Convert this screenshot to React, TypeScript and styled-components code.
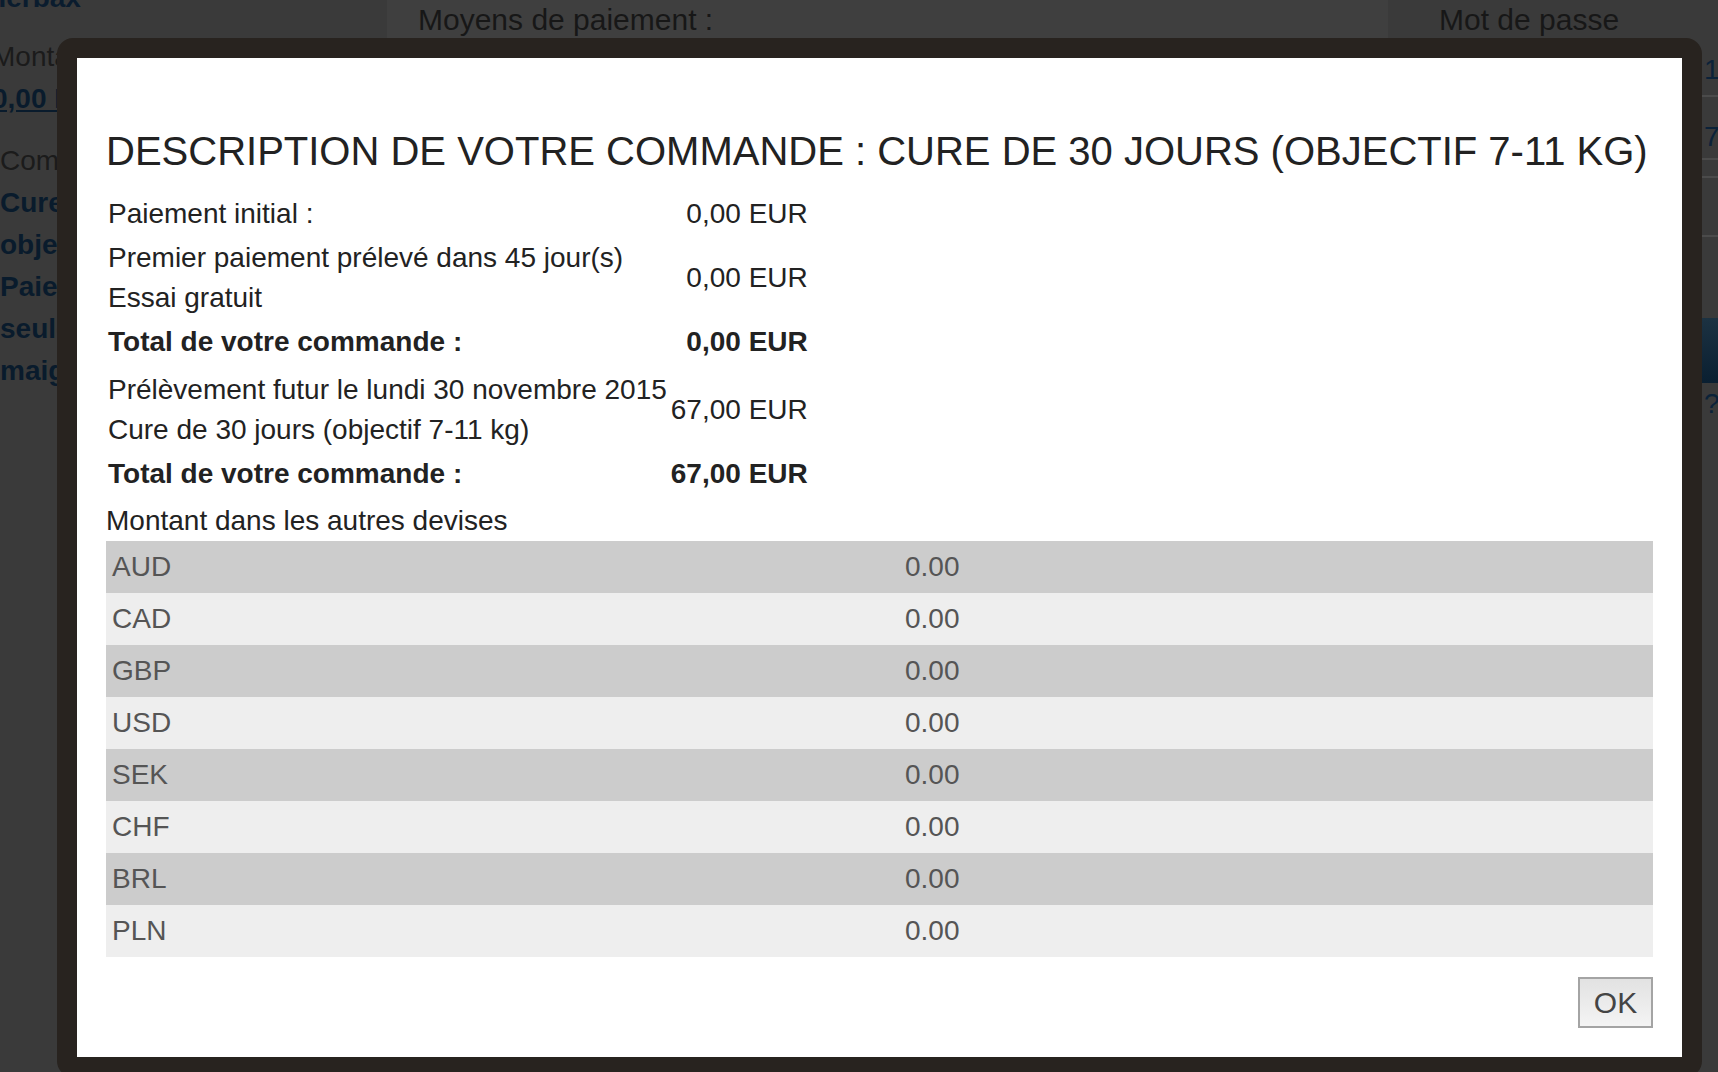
import React from "react";
import styled, { createGlobalStyle } from "styled-components";

const GlobalStyle = createGlobalStyle`
  html, body {
    margin: 0;
    padding: 0;
    height: 100%;
    overflow: hidden;
    background: #3a3a3a;
  }
  body {
    font-family: "Liberation Sans", Arial, Helvetica, sans-serif;
  }
`;

// page behind the dialog, drawn already dimmed by the backdrop
const Page = styled.div`
  display: grid;
  grid-template-columns: 387px 1001px 1fr;
  grid-template-rows: 40px 1fr;
  height: 100vh;
  font-size: 28px;
  color: #1a1a1a;
`;

const SideColumn = styled.div`
  grid-row: 1 / span 2;
  overflow: hidden;
  line-height: 42px;
  white-space: nowrap;
`;

const Brand = styled.div`
  margin: -23px 0 0 -14px;
  font-weight: bold;
  color: #0a1c2e;
`;

const SideLabel = styled.div<{ $top?: number; $shift?: number }>`
  margin-top: ${(p) => p.$top ?? 0}px;
  margin-left: ${(p) => p.$shift ?? 0}px;
  color: #1b1b1b;
`;

const SideLink = styled.div<{ $top?: number; $shift?: number }>`
  margin-top: ${(p) => p.$top ?? 0}px;
  margin-left: ${(p) => p.$shift ?? 0}px;
  font-weight: bold;
  color: #091b2c;
`;

const Amount0 = styled(SideLink)`
  text-decoration: underline;
`;

const HeadCell = styled.div<{ $indent: number; $lit?: boolean }>`
  padding-left: ${(p) => p.$indent}px;
  font-size: 30px;
  line-height: 40px;
  background: ${(p) => (p.$lit ? "#3f3f3f" : "#3a3a3a")};
  color: #171717;
  white-space: nowrap;
`;

const MidBody = styled.div`
  background: #3c3c3c;
`;

const LoginBody = styled.div`
  padding-left: 314px;
  line-height: 42px;
`;

const Field = styled.div<{ $top: number; $bottom: number }>`
  padding: ${(p) => p.$top}px 0 ${(p) => p.$bottom}px 2px;
  border-bottom: 2px solid #4b4b4b;
  color: #0b2239;
`;

const Rule = styled.div<{ $top: number }>`
  margin-top: ${(p) => p.$top}px;
  height: 2px;
  background: #4b4b4b;
`;

const LoginButton = styled.div`
  margin-top: 81px;
  height: 65px;
  background: linear-gradient(#1c3242, #0a1f31);
`;

const Help = styled.div`
  color: #0b2239;
  padding-left: 2px;
`;

// order summary dialog
const Dialog = styled.div`
  position: fixed;
  left: 57px;
  top: 38px;
  width: 1645px;
  box-sizing: border-box;
  border: 20px solid #28231f;
  border-radius: 16px;
  background: #fff;
  padding: 30px 29px 29px 29px;
  color: #222;
`;

const Title = styled.h1`
  margin: 40px 0 18px;
  font-size: 40px;
  line-height: 46px;
  font-weight: normal;
  white-space: nowrap;
`;

const Summary = styled.div`
  display: grid;
  grid-template-columns: max-content max-content;
  font-size: 28px;
  line-height: 40px;
`;

const Label = styled.div<{ $strong?: boolean; $spaced?: boolean }>`
  padding: 2px;
  margin-top: ${(p) => (p.$spaced ? 4 : 0)}px;
  font-weight: ${(p) => (p.$strong ? "bold" : "normal")};
`;

const Value = styled(Label)`
  text-align: right;
  align-self: center;
  white-space: nowrap;
`;

const Caption = styled.div`
  margin-top: 5px;
  font-size: 28px;
  line-height: 40px;
`;

const Rates = styled.div`
  display: grid;
  grid-template-columns: 793px 1fr;
  font-size: 28px;
  color: #555;
`;

const RateCell = styled.div<{ $shade: boolean }>`
  background: ${(p) => (p.$shade ? "#ccc" : "#eee")};
  line-height: 52px;
  padding-left: 6px;
`;

const Footer = styled.div`
  display: flex;
  justify-content: flex-end;
  margin-top: 20px;
`;

const OkButton = styled.button`
  width: 75px;
  height: 51px;
  box-sizing: border-box;
  padding: 0;
  border: 2px solid #a4a4a4;
  background: linear-gradient(#e2e2e2, #f4f4f4);
  font-family: inherit;
  font-size: 30px;
  color: #444;
  cursor: pointer;
`;

const currencies = ["AUD", "CAD", "GBP", "USD", "SEK", "CHF", "BRL", "PLN"];

export default function App() {
  return (
    <>
      <GlobalStyle />
      <Page>
        <SideColumn>
          <Brand>Herbax</Brand>
          <SideLabel $top={17} $shift={-8}>Montant</SideLabel>
          <Amount0 $shift={-8}>0,00 EUR</Amount0>
          <SideLabel $top={20}>Commande</SideLabel>
          <SideLink>Cure de 30 jours</SideLink>
          <SideLink>objectif 7-11 kg</SideLink>
          <SideLink>Paiement</SideLink>
          <SideLink>seulement</SideLink>
          <SideLink>maigrir</SideLink>
        </SideColumn>
        <HeadCell $indent={31} $lit>
          Moyens de paiement :
        </HeadCell>
        <HeadCell $indent={51}>Mot de passe</HeadCell>
        <MidBody />
        <LoginBody>
          <Field $top={9} $bottom={4}>1</Field>
          <Field $top={19} $bottom={0}>7</Field>
          <Rule $top={16} />
          <Rule $top={57} />
          <LoginButton />
          <Help>?</Help>
        </LoginBody>
      </Page>

      <Dialog>
        <Title>DESCRIPTION DE VOTRE COMMANDE : CURE DE 30 JOURS (OBJECTIF 7-11 KG)</Title>
        <Summary>
          <Label>Paiement initial :</Label>
          <Value>0,00 EUR</Value>
          <Label>
            Premier paiement prélevé dans 45 jour(s)
            <br />
            Essai gratuit
          </Label>
          <Value>0,00 EUR</Value>
          <Label $strong>Total de votre commande :</Label>
          <Value $strong>0,00 EUR</Value>
          <Label $spaced>
            Prélèvement futur le lundi 30 novembre 2015
            <br />
            Cure de 30 jours (objectif 7-11 kg)
          </Label>
          <Value $spaced>67,00 EUR</Value>
          <Label $strong>Total de votre commande :</Label>
          <Value $strong>67,00 EUR</Value>
        </Summary>
        <Caption>Montant dans les autres devises</Caption>
        <Rates>
          {currencies.map((code, i) => (
            <React.Fragment key={code}>
              <RateCell $shade={i % 2 === 0}>{code}</RateCell>
              <RateCell $shade={i % 2 === 0}>0.00</RateCell>
            </React.Fragment>
          ))}
        </Rates>
        <Footer>
          <OkButton>OK</OkButton>
        </Footer>
      </Dialog>
    </>
  );
}
